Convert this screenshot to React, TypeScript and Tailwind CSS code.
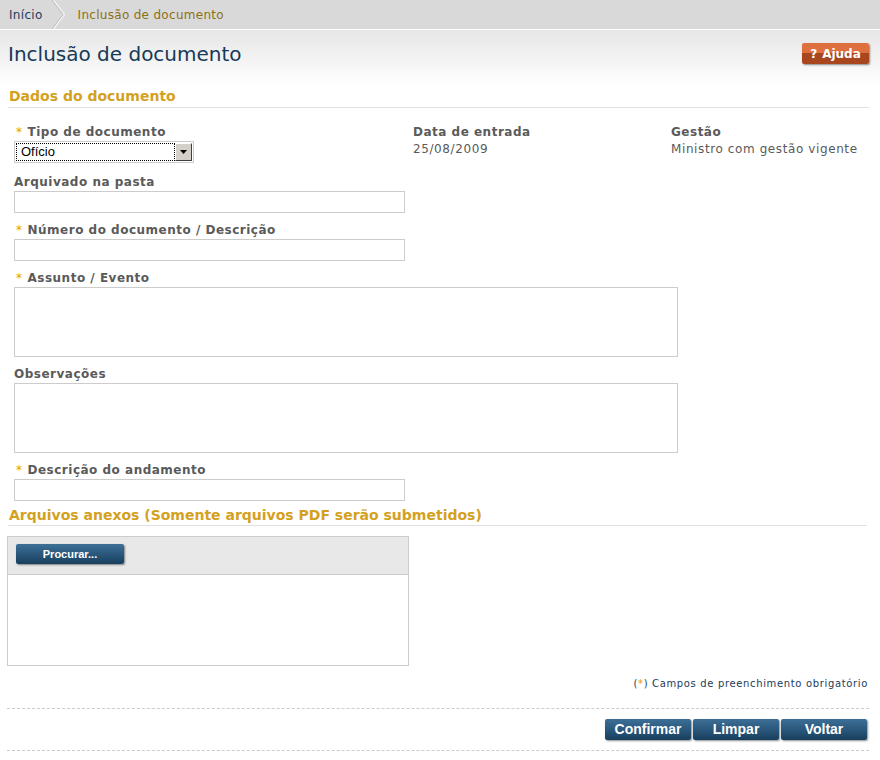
const font = { fontFamily: '"DejaVu Sans", Verdana, sans-serif' }

function Label({ text, required }: { text: string; required?: boolean }) {
  return (
    <div className="text-[12px] font-bold leading-[15px] tracking-[0.5px] text-[#5a5a5a]">
      {required && <span className="ml-[2px] mr-[5px] font-normal text-[#e0a000]">*</span>}
      {text}
    </div>
  )
}

function Field({ label, required, h, w, first }: { label: string; required?: boolean; h: string; w: string; first?: boolean }) {
  return (
    <div className={first ? 'mt-[12px]' : 'mt-[10px]'}>
      <Label text={label} required={required} />
      <div className={`mt-[1px] border border-[#cccccc] ${h} ${w}`} />
    </div>
  )
}

function BlueButton({ text, className }: { text: string; className: string }) {
  return (
    <button
      className={`flex items-center justify-center rounded-[2px] bg-gradient-to-b from-[#3d6f96] via-[#2a587c] to-[#173f5e] text-white font-bold shadow-[1px_1px_2px_rgba(0,0,0,0.45)] ${className}`}
      style={{ fontFamily: '"Liberation Sans", Arial, sans-serif' }}
    >
      {text}
    </button>
  )
}

export default function App() {
  return (
    <div className="w-[880px] h-[760px] bg-white" style={font}>
      {/* breadcrumb */}
      <div className="flex h-[30px] items-center border-b border-white bg-[#d9d9d9] text-[12px] tracking-[0.3px]">
        <span className="ml-[9px] text-[#1d3c5a]">Início</span>
        <svg width="16" height="29" viewBox="0 0 16 29" className="ml-[9px]">
          <polyline points="1,0 12,14.5 1,29" fill="none" stroke="#f2f2f2" strokeWidth="2" />
          <polyline points="0,0 11,14.5 0,29" fill="none" stroke="#b8b8b8" strokeWidth="1" />
        </svg>
        <span className="ml-[10px] text-[#8f6f12]">Inclusão de documento</span>
      </div>

      <div className="bg-gradient-to-b from-[#e6e6e6] to-white to-[55px] px-[8px] pt-[12px]">
        <div className="flex items-start justify-between">
          <h1 className="text-[20px] leading-[24px] text-[#163a58]">Inclusão de documento</h1>
          <button className="mt-[1px] mr-[3px] flex h-[21px] w-[67px] items-center justify-center gap-[5px] rounded-[2px] bg-gradient-to-b from-[#de7040] from-50% to-[#a8461e] to-50% text-[12px] font-bold text-white shadow-[1px_1px_2px_rgba(0,0,0,0.45)]">
            <span>?</span>
            <span>Ajuda</span>
          </button>
        </div>

        <h2 className="mt-[21px] mr-[3px] border-b border-[#e0e0e0] pl-[1px] pb-[2px] text-[14px] font-bold leading-[18px] text-[#d4a11e]">
          Dados do documento
        </h2>
      </div>

      <div className="px-[14px] pt-[17px]">
        <div className="flex">
          <div className="w-[399px]">
            <Label text="Tipo de documento" required />
            <div className="mt-[1px] flex h-[22px] w-[180px] items-center border border-[#cccccc] bg-white p-[1px]">
              <div className="flex h-full flex-1 items-center border border-dotted border-black pl-[4px] text-[13px] text-black" style={{ fontFamily: '"Liberation Sans", Arial, sans-serif' }}>
                Ofício
              </div>
              <div className="flex h-[18px] w-[17px] items-center justify-center border border-t-white border-l-white border-r-[#404040] border-b-[#404040] bg-[#d4d0c8]">
                <svg width="7" height="4" viewBox="0 0 7 4"><polygon points="0,0 7,0 3.5,4" fill="#000" /></svg>
              </div>
            </div>
          </div>
          <div className="w-[258px]">
            <Label text="Data de entrada" />
            <div className="mt-[2px] text-[12px] leading-[15px] tracking-[0.6px] text-[#5a5a5a]">25/08/2009</div>
          </div>
          <div>
            <Label text="Gestão" />
            <div className="mt-[2px] text-[12px] leading-[15px] tracking-[0.6px] text-[#5a5a5a]">Ministro com gestão vigente</div>
          </div>
        </div>

        <Field first label="Arquivado na pasta" h="h-[22px]" w="w-[391px]" />
        <Field label="Número do documento / Descrição" required h="h-[22px]" w="w-[391px]" />
        <Field label="Assunto / Evento" required h="h-[70px]" w="w-[664px]" />
        <Field label="Observações" h="h-[70px]" w="w-[664px]" />
        <Field label="Descrição do andamento" required h="h-[22px]" w="w-[391px]" />
      </div>

      <div className="px-[8px]">
        <h2 className="mt-[5px] mr-[5px] border-b border-[#e0e0e0] pl-[1px] pb-[1px] text-[14px] font-bold leading-[18px] text-[#d4a11e]">
          Arquivos anexos (Somente arquivos PDF serão submetidos)
        </h2>

        <div className="mt-[10px] ml-[-1px] h-[130px] w-[402px] border border-[#cccccc]">
          <div className="h-[38px] border-b border-[#cccccc] bg-[#e8e8e8] pl-[8px] pt-[7px]">
            <BlueButton text="Procurar..." className="h-[20px] w-[108px] text-[11px]" />
          </div>
        </div>

        <div className="mt-[12px] mr-[4px] text-right text-[10px] leading-[12px] tracking-[0.65px] text-[#1d3c5a]">
          (<span className="text-[#e0a000]">*</span>) Campos de preenchimento obrigatório
        </div>

        <div className="mt-[18px] ml-[-1px] mr-[3px] border-t border-dashed border-[#cccccc]" />
        <div className="mt-[10px] mr-[5px] flex justify-end gap-[2px]">
          <BlueButton text="Confirmar" className="h-[21px] w-[86px] text-[14px]" />
          <BlueButton text="Limpar" className="h-[21px] w-[86px] text-[14px]" />
          <BlueButton text="Voltar" className="h-[21px] w-[86px] text-[14px]" />
        </div>
        <div className="mt-[10px] ml-[-1px] mr-[3px] border-t border-dashed border-[#cccccc]" />
      </div>
    </div>
  )
}
